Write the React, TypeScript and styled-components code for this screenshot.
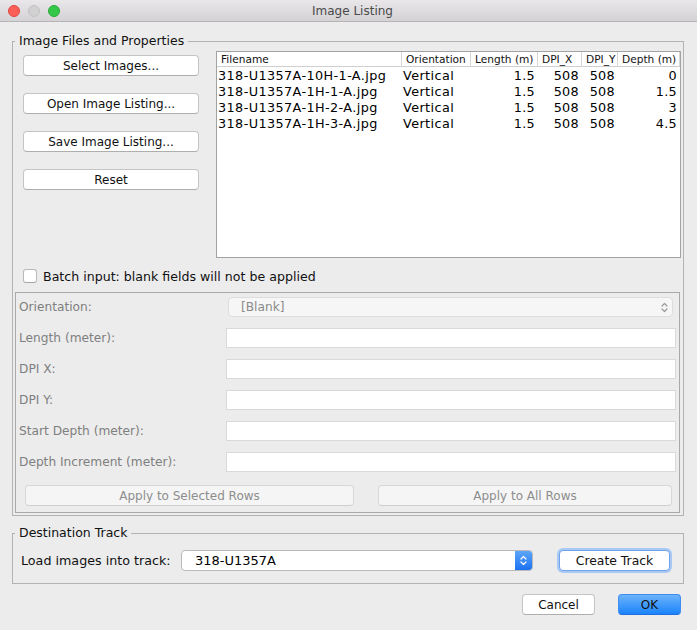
import React from "react";
import styled, { createGlobalStyle } from "styled-components";

const Global = createGlobalStyle`
  html, body { margin: 0; padding: 0; }
  body {
    background: #ececec;
    font-family: "DejaVu Sans", "Noto Sans", sans-serif;
    font-size: 12px;
    color: #1a1a1a;
  }
  * { box-sizing: border-box; }
`;

const Window = styled.div`
  width: 697px;
  height: 630px;
  display: flex;
  flex-direction: column;
  background: #ececec;
  overflow: hidden;
`;

const TitleBar = styled.div`
  height: 22px;
  flex: none;
  display: grid;
  grid-template-columns: 1fr auto 1fr;
  align-items: center;
  padding: 1px 0 0 8px;
  background: linear-gradient(#e9e7e9, #d4d2d4);
  border-bottom: 1px solid #b6b4b6;
`;

const Lights = styled.div`
  display: flex;
  gap: 8px;
`;

const Light = styled.span<{ $c: string; $b: string }>`
  width: 12px;
  height: 12px;
  border-radius: 50%;
  background: ${(p) => p.$c};
  border: 1px solid ${(p) => p.$b};
`;

const Title = styled.div`
  font-size: 12px;
  color: #4a4a4a;
`;

const Body = styled.div`
  display: flex;
  flex-direction: column;
  padding: 0 13px 0 12px;
`;

const Group = styled.fieldset<{ $mt: number }>`
  margin: ${(p) => p.$mt}px 0 0 0;
  padding: 0;
  min-width: 0;
  border: 1px solid #b3b3b3;
`;

const Legend = styled.legend`
  margin-left: 2px;
  padding: 0 4px;
  font-size: 12.5px;
  line-height: 16px;
  color: #111;
`;

const TopRow = styled.div`
  display: flex;
  gap: 17px;
  padding: 2px 2px 0 10px;
`;

const ButtonCol = styled.div`
  width: 176px;
  display: flex;
  flex-direction: column;
  gap: 17px;
  padding-top: 4px;
`;

const Button = styled.button<{ $w?: number; $primary?: boolean; $focus?: boolean; $disabled?: boolean }>`
  height: 21px;
  width: ${(p) => (p.$w ? `${p.$w}px` : "100%")};
  margin: 0;
  padding: 0;
  font-family: inherit;
  font-size: ${(p) => (p.$focus ? "12.4px" : "12px")};
  color: ${(p) => (p.$disabled ? "#8d8d8d" : "#111")};
  border-radius: 4px;
  border: 1px solid
    ${(p) => (p.$primary ? "#3f8cf3" : p.$focus ? "#6fa3ec" : p.$disabled ? "#d8d8d8" : "#c4c4c4")};
  border-bottom-color: ${(p) => (p.$primary ? "#1f6fe0" : p.$focus ? "#6fa3ec" : p.$disabled ? "#cfcfcf" : "#aeaeae")};
  background: ${(p) =>
    p.$primary
      ? "linear-gradient(#6cb3fb, #1a84fb)"
      : p.$disabled
      ? "#f5f5f5"
      : "#ffffff"};
  box-shadow: ${(p) => (p.$focus ? "0 0 0 2px #a9c9f4" : "none")};
`;

const Table = styled.div`
  width: 465px;
  height: 207px;
  background: #fff;
  border: 1px solid #a2a2a2;
  display: grid;
  grid-template-columns: 185px 69px 67px 44px 36px 62px;
  grid-auto-rows: 16px;
  align-content: start;
`;

const HeadCell = styled.div`
  height: 15px;
  font-size: 10.6px;
  line-height: 15px;
  padding: 0 4px;
  border-bottom: 1px solid #cfcfcf;
  border-right: 1px solid #d6d6d6;
  white-space: nowrap;
  overflow: hidden;
  color: #111;
`;

const Cell = styled.div<{ $right?: boolean }>`
  font-size: 12.8px;
  line-height: 16px;
  letter-spacing: ${(p) => (p.$right ? "0.3px" : "0.4px")};
  padding: ${(p) => (p.$right ? "0 3px 0 0" : "0 0 0 1px")};
  text-align: ${(p) => (p.$right ? "right" : "left")};
  white-space: nowrap;
  color: #000;
`;

const CheckRow = styled.label`
  display: flex;
  align-items: center;
  gap: 6px;
  height: 16px;
  margin-top: 10px;
  padding-left: 10px;
  font-size: 12.6px;
  color: #111;
`;

const CheckBox = styled.span`
  width: 14px;
  height: 14px;
  border-radius: 3px;
  background: #fff;
  border: 1px solid #b9b9b9;
  border-bottom-color: #a7a7a7;
`;

const Panel = styled.div`
  margin: 8px 3px 2px 2px;
  border: 1px solid #a9a9a9;
  padding: 4px 3px 6px 3px;
  display: flex;
  flex-direction: column;
`;

const FormGrid = styled.div`
  display: grid;
  grid-template-columns: 207px 450px;
  grid-auto-rows: 20px;
  row-gap: 11px;
  align-items: center;
`;

const FieldLabel = styled.span`
  font-size: 12.2px;
  color: #7f7f7f;
`;

const TextField = styled.div`
  height: 20px;
  background: #fff;
  border: 1px solid #d9d9d9;
`;

const DisabledCombo = styled.div`
  height: 20px;
  margin: 0 3px 0 2px;
  border-radius: 4px;
  border: 1px solid #dddddd;
  background: #f6f6f6;
  display: flex;
  align-items: center;
  justify-content: space-between;
  padding: 0 4px 0 12px;
  font-size: 12.2px;
  color: #8a8a8a;
`;

const ApplyRow = styled.div`
  display: flex;
  gap: 24px;
  margin-top: 13px;
  padding-left: 6px;
`;

const DestRow = styled.div`
  display: flex;
  align-items: center;
  height: 21px;
  margin: 9px 0 12px 0;
  padding-left: 8px;
`;

const DestLabel = styled.span`
  width: 160px;
  font-size: 12.7px;
  color: #111;
`;

const Combo = styled.div`
  width: 352px;
  height: 21px;
  display: flex;
  border-radius: 4px;
  border: 1px solid #b9b9b9;
  background: #fff;
  overflow: hidden;
  margin-right: 26px;
`;

const ComboText = styled.span`
  flex: 1;
  padding-left: 13px;
  line-height: 19px;
  font-size: 13px;
  color: #000;
`;

const Stepper = styled.span`
  width: 17px;
  display: flex;
  align-items: center;
  justify-content: center;
  background: linear-gradient(#5ea6fa, #1b71f2);
`;

const Footer = styled.div`
  display: flex;
  justify-content: flex-end;
  gap: 23px;
  margin-top: 10px;
  padding-right: 3px;
`;

const Chevrons = ({ color }: { color: string }) => (
  <svg width="7" height="11" viewBox="0 0 7 11">
    <path d="M1 4 L3.5 1.5 L6 4" fill="none" stroke={color} strokeWidth="1.2" strokeLinecap="round" strokeLinejoin="round" />
    <path d="M1 7 L3.5 9.5 L6 7" fill="none" stroke={color} strokeWidth="1.2" strokeLinecap="round" strokeLinejoin="round" />
  </svg>
);

const rows = [
  ["318-U1357A-10H-1-A.jpg", "Vertical", "1.5", "508", "508", "0"],
  ["318-U1357A-1H-1-A.jpg", "Vertical", "1.5", "508", "508", "1.5"],
  ["318-U1357A-1H-2-A.jpg", "Vertical", "1.5", "508", "508", "3"],
  ["318-U1357A-1H-3-A.jpg", "Vertical", "1.5", "508", "508", "4.5"],
];

const headers = ["Filename", "Orientation", "Length (m)", "DPI_X", "DPI_Y", "Depth (m)"];

const fields = ["Length (meter):", "DPI X:", "DPI Y:", "Start Depth (meter):", "Depth Increment (meter):"];

export default function App() {
  return (
    <Window>
      <Global />
      <TitleBar>
        <Lights>
          <Light $c="#fc5f57" $b="#e0443e" />
          <Light $c="#d1d1d1" $b="#c2c2c2" />
          <Light $c="#34c84a" $b="#27aa35" />
        </Lights>
        <Title>Image Listing</Title>
        <span />
      </TitleBar>
      <Body>
        <Group $mt={11}>
          <Legend>Image Files and Properties</Legend>
          <TopRow>
            <ButtonCol>
              <Button>Select Images...</Button>
              <Button>Open Image Listing...</Button>
              <Button>Save Image Listing...</Button>
              <Button>Reset</Button>
            </ButtonCol>
            <Table>
              {headers.map((h) => (
                <HeadCell key={h}>{h}</HeadCell>
              ))}
              {rows.map((r) =>
                r.map((c, i) => (
                  <Cell key={r[0] + i} $right={i >= 2}>
                    {c}
                  </Cell>
                ))
              )}
            </Table>
          </TopRow>
          <CheckRow>
            <CheckBox />
            Batch input: blank fields will not be applied
          </CheckRow>
          <Panel>
            <FormGrid>
              <FieldLabel>Orientation:</FieldLabel>
              <DisabledCombo>
                [Blank]
                <Chevrons color="#9a9a9a" />
              </DisabledCombo>
              {fields.map((f) => (
                <React.Fragment key={f}>
                  <FieldLabel>{f}</FieldLabel>
                  <TextField />
                </React.Fragment>
              ))}
            </FormGrid>
            <ApplyRow>
              <Button $w={329} $disabled>
                Apply to Selected Rows
              </Button>
              <Button $w={294} $disabled>
                Apply to All Rows
              </Button>
            </ApplyRow>
          </Panel>
        </Group>
        <Group $mt={9}>
          <Legend>Destination Track</Legend>
          <DestRow>
            <DestLabel>Load images into track:</DestLabel>
            <Combo>
              <ComboText>318-U1357A</ComboText>
              <Stepper>
                <Chevrons color="#ffffff" />
              </Stepper>
            </Combo>
            <Button $w={111} $focus>
              Create Track
            </Button>
          </DestRow>
        </Group>
        <Footer>
          <Button $w={73}>Cancel</Button>
          <Button $w={63} $primary>
            OK
          </Button>
        </Footer>
      </Body>
    </Window>
  );
}
